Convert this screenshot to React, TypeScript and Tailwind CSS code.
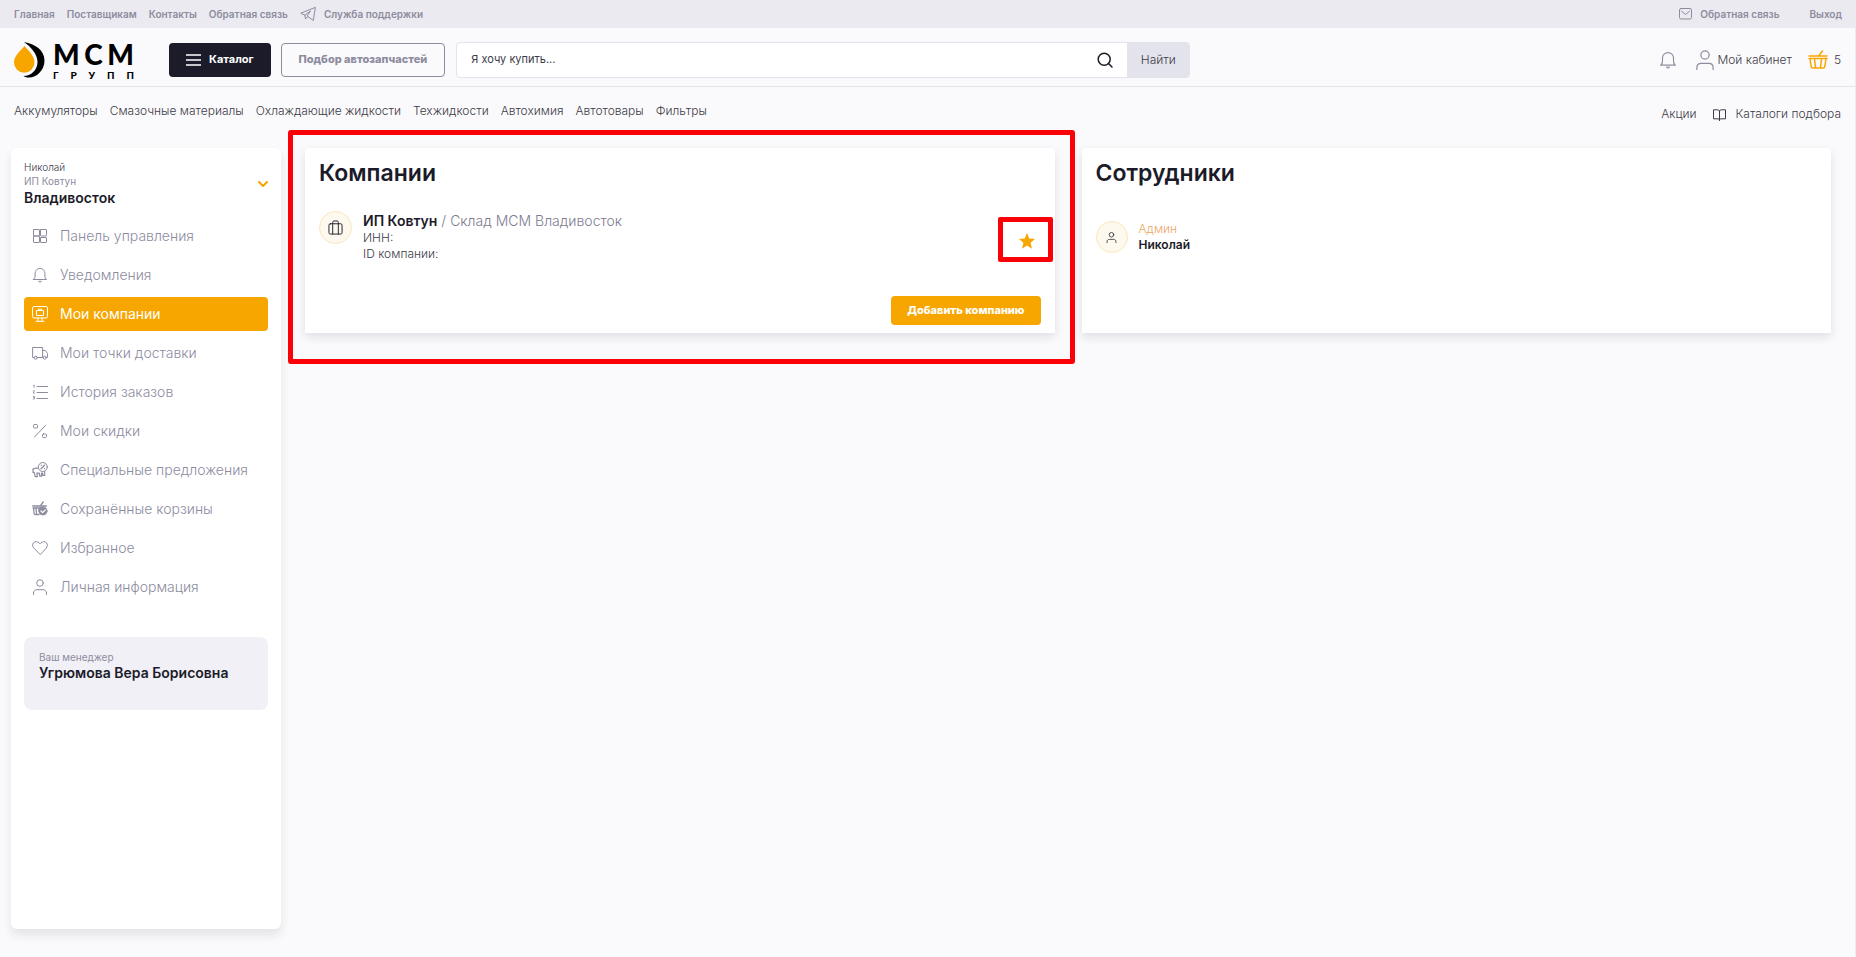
import type { ReactNode } from "react"

const topLinks = ["Главная", "Поставщикам", "Контакты", "Обратная связь"]

const categories = [
  "Аккумуляторы",
  "Смазочные материалы",
  "Охлаждающие жидкости",
  "Техжидкости",
  "Автохимия",
  "Автотовары",
  "Фильтры",
]

interface IconProps {
  className?: string
  viewBox?: string
  strokeWidth?: number
  children: ReactNode
}

function Icon({ className = "size-4", viewBox = "0 0 16 16", strokeWidth = 1, children }: IconProps) {
  return (
    <svg
      className={`shrink-0 ${className}`}
      viewBox={viewBox}
      fill="none"
      stroke="currentColor"
      strokeWidth={strokeWidth}
      strokeLinecap="round"
      strokeLinejoin="round"
      aria-hidden="true"
    >
      {children}
    </svg>
  )
}

const bell = (
  <>
    <path d="M1.5 12.5h13c-1-1-1.6-2-1.6-3.5V6.3a4.9 4.9 0 0 0-9.8 0V9c0 1.500-.6 2.500-1.6 3.5Z" />
    <path d="M6.500 14.500c.8 1 2.200 1 3 0Z" fill="currentColor" strokeWidth="0.500" />
  </>
)

const person = (
  <>
    <circle cx="8" cy="4" r="3.3" />
    <path d="M1.500 15.500V14c0-2 1.500-3.300 3.500-3.300h6c2 0 3.500 1.300 3.500 3.300v1.500" />
  </>
)

const menu = [
  {
    label: "Панель управления",
    icon: (
      <>
        <rect x="1.500" y="1.500" width="6" height="6.500" rx="0.500" />
        <rect x="8.500" y="1.500" width="6" height="6.500" rx="0.500" />
        <rect x="1.500" y="8" width="6" height="6.500" rx="0.500" />
        <rect x="8.500" y="9.500" width="6" height="5" rx="0.500" />
      </>
    ),
  },
  { label: "Уведомления", icon: bell },
  {
    label: "Мои компании",
    active: true,
    icon: (
      <>
        <rect x="0.500" y="0.500" width="15" height="11.500" rx="1.500" />
        <rect x="4.500" y="4.500" width="7" height="5" rx="0.500" />
        <path d="M6.300 4.500V3.200h3.400v1.300M6 12v3M10 12v3M4 15.300h8" />
      </>
    ),
  },
  {
    label: "Мои точки доставки",
    icon: (
      <>
        <path d="M2.300 12.500H.6V2.500h10v10H5.500M10.600 5.500h2.800l2.100 3v4h-1.200M10.600 12.500h.6" />
        <circle cx="3.800" cy="12.700" r="1.500" />
        <circle cx="12.700" cy="12.700" r="1.500" />
      </>
    ),
  },
  {
    label: "История заказов",
    icon: (
      <>
        <path d="M5 2.500h10.500M5 8.500h10.500M5 14.500h10.500" />
        <path d="M1.500 1.500l.7-.5v2.500M1.200 6.800h1.300L1.200 9.200h1.300M1.200 12.500h1.300v2.500H1.200M1.500 13.700h1" strokeWidth="0.800" />
      </>
    ),
  },
  {
    label: "Мои скидки",
    icon: (
      <>
        <path d="M13.500 2.500l-11 11.500" />
        <rect x="1.500" y="1.500" width="4" height="3.500" rx="1" />
        <rect x="10.500" y="11" width="4" height="3.500" rx="1" />
      </>
    ),
  },
  {
    label: "Специальные предложения",
    icon: (
      <>
        <circle cx="10.800" cy="5" r="4.500" />
        <path d="M12.500 3.200L9 6.800M9.200 3.200h.1M12.400 6.600h.1" strokeWidth="1.300" />
        <path d="M6 6.200H3.500c-.6 0-.8.600-1.400.600H1v3.600h1.200l1 4.200h2.200l-.6-3.400h2.500l.5 3h1.800L9.500 11h1.200v2.500h2V9.500" strokeWidth="1.200" />
      </>
    ),
  },
  {
    label: "Сохранённые корзины",
    icon: (
      <>
        <path d="M.8 5h13.600M9 4l2.200-3M1.500 7l.6 5.500c.1.700.5 1 1.200 1H7M1 7h8M4 7.500l.5 4.500M7 7.500v3" strokeWidth="1.300" />
        <circle cx="11" cy="10" r="4" fill="currentColor" />
        <path d="M9 10l1.600 1.600L13.200 9" stroke="white" strokeWidth="1.200" />
      </>
    ),
  },
  {
    label: "Избранное",
    icon: <path d="M8 14.300L1.500 7.800A3.800 3.800 0 0 1 1.300 3C2.900 1.200 5.500 1.300 7 2.900l1 1 1-1c1.500-1.600 4.100-1.700 5.700.1a3.800 3.800 0 0 1-.2 4.800Z" />,
  },
  { label: "Личная информация", icon: person },
]

function Logo() {
  return (
    <a href="#" className="flex w-[120px] shrink-0 items-center gap-2 text-black" aria-label="МСМ Групп">
      <svg className="h-9 w-[31px] shrink-0" viewBox="0 0 31 36" aria-hidden="true">
        <path d="M10 0c11 2 20.500 8 20.500 18.500C30.500 28 23 35.500 15 35.500c-2 0-4-.5-5.500-1.500C17 34 23.500 28 23.500 20 23.500 12 17 5 10 0Z" fill="#000" />
        <path d="M10.500 4C16 10 20.500 14.500 20.500 20.500a10.200 10.200 0 0 1-20.500 0C0 14.500 5 10 10.500 4Z" fill="#f7a600" />
      </svg>
      <span className="flex min-w-0 flex-1 flex-col font-[Lato,sans-serif]">
        <span className="flex justify-between text-[28px] leading-[30px] font-black">
          <span>М</span>
          <span>С</span>
          <span>М</span>
        </span>
        <span className="flex justify-between text-[10px] leading-3 font-black">
          <span>Г</span>
          <span>Р</span>
          <span>У</span>
          <span>П</span>
          <span>П</span>
        </span>
      </span>
    </a>
  )
}

function TopBar() {
  return (
    <div className="flex h-7 items-center justify-between bg-[#ebeaf0] px-[14px] text-[10px] font-semibold text-[#8d8c9f]">
      <nav className="flex items-center gap-3">
        {topLinks.map((link) => (
          <a key={link} href="#">{link}</a>
        ))}
        <a href="#" className="flex items-center gap-2">
          <Icon>
            <path d="M15 1.500L.8 7.200l4 2L10.500 5 7 10l6 4.200ZM4.800 9.200L5.500 13l2-2.300" />
          </Icon>
          Служба поддержки
        </a>
      </nav>
      <div className="flex items-center gap-[30px]">
        <a href="#" className="flex items-center gap-2">
          <Icon className="h-3 w-[13px]" viewBox="0 0 13 12">
            <rect x="0.500" y="0.500" width="12" height="10.500" rx="1.500" />
            <path d="M2.500 3.200l4 3.300 4-3.300" />
          </Icon>
          Обратная связь
        </a>
        <a href="#">Выход</a>
      </div>
    </div>
  )
}

function Header() {
  return (
    <header className="flex h-[59px] items-center border-b border-[#e3e3ea] px-[14px] pt-[5px]">
      <Logo />
      <button className="ml-[35px] flex h-[34px] items-center gap-2 rounded bg-[#1c1b29] px-[17px] text-[11px] font-bold text-white">
        <svg className="h-3 w-[15px]" viewBox="0 0 15 12" stroke="currentColor" strokeWidth="1.500" aria-hidden="true">
          <path d="M0 1h15M0 6h15M0 11h15" />
        </svg>
        Каталог
      </button>
      <button className="ml-[10px] h-[34px] rounded border border-[#8d8c9f] px-[17px] text-[11px] font-extrabold text-[#8d8c9f]">
        Подбор автозапчастей
      </button>
      <form className="ml-[11px] flex h-9 w-[41%] max-w-[734px] rounded border border-[#e3e3ea] bg-white">
        <input
          type="search"
          aria-label="Поиск товаров"
          placeholder="Я хочу купить..."
          className="min-w-0 flex-1 px-[14px] text-[11px] outline-none placeholder:text-[#3c3b47]"
        />
        <span className="mr-[14px] flex items-center text-[#1c1b29]">
          <Icon className="size-4" strokeWidth={1.5}>
            <circle cx="7.200" cy="7.200" r="6" />
            <path d="M11.500 11.500l3.500 3.500" />
          </Icon>
        </span>
        <button type="button" className="w-[62px] bg-[#e3e3ec] text-xs font-light text-[#3c3b47]">Найти</button>
      </form>
      <div className="ml-auto flex items-center text-xs font-light text-[#3c3b47]">
        <button aria-label="Уведомления" className="text-[#8d8c9f]">
          <Icon className="size-[18px]">{bell}</Icon>
        </button>
        <a href="#" className="ml-[18px] flex items-center gap-[2px]">
          <Icon className="size-5 text-[#8d8c9f]">{person}</Icon>
          Мой кабинет
        </a>
        <a href="#" className="ml-4 flex items-center gap-[6px]">
          <Icon className="h-[19px] w-5 text-[#f7a600]" viewBox="0 0 20 19" strokeWidth={1.5}>
            <path d="M1 6h18M1 8.500h18M11 5.500L14.500 1M2 9l1.200 7.500c.2 1 .8 1.500 1.800 1.500h10c1 0 1.600-.5 1.800-1.500L18 9M6.500 9l1 8.500M13.500 9l-1 8.500" />
          </Icon>
          5
        </a>
      </div>
    </header>
  )
}

function CategoryBar() {
  return (
    <div className="flex h-[61px] justify-between px-[14px] pt-4 text-xs leading-4 font-light text-[#3c3b47]">
      <nav className="flex gap-3">
        {categories.map((name) => (
          <a key={name} href="#">{name}</a>
        ))}
      </nav>
      <nav className="flex gap-4 pt-[3px]">
        <a href="#">Акции</a>
        <a href="#" className="flex gap-[10px]">
          <Icon className="mt-[3px] h-3 w-[13px]" viewBox="0 0 13 12">
            <path d="M6.500 2v9.500M6.500 2C6 1 5 .8 4 .8H.5v9H5c.8 0 1.500.7 1.500 1.700 0-1 .7-1.700 1.500-1.700h4.500v-9H9C8 .8 7 1 6.500 2Z" />
          </Icon>
          Каталоги подбора
        </a>
      </nav>
    </div>
  )
}

function Sidebar() {
  return (
    <aside className="w-[270px] shrink-0 rounded-md bg-white px-[13px] pt-3 shadow-[0_6px_10px_rgba(30,30,60,0.1)]">
      <button className="flex w-full items-center justify-between text-left">
        <span className="flex flex-col">
          <span className="text-[10px] leading-[14px] font-light text-[#3c3b47]">Николай</span>
          <span className="text-[10px] leading-[14px] text-[#8d8c9f]">ИП Ковтун</span>
          <span className="text-sm leading-[19px] font-semibold text-[#1c1b29]">Владивосток</span>
        </span>
        <Icon className="h-[6px] w-[10px] text-[#f7a600]" viewBox="0 0 10 6" strokeWidth={2}>
          <path d="M1 1l4 4 4-4" />
        </Icon>
      </button>
      <nav className="mt-3 flex flex-col gap-[5px]">
        {menu.map((item) => (
          <a
            key={item.label}
            href="#"
            className={`flex h-[34px] items-center gap-3 rounded px-2 text-sm ${
              item.active ? "bg-[#f7a600] text-white" : "font-light text-[#8d8c9f]"
            }`}
          >
            <Icon>{item.icon}</Icon>
            {item.label}
          </a>
        ))}
      </nav>
      <div className="mt-[33px] h-[73px] rounded-lg bg-[#f1f0f6] px-[15px] pt-3">
        <p className="text-[10px] leading-4 text-[#8d8c9f]">Ваш менеджер</p>
        <p className="text-sm leading-4 font-semibold text-[#1c1b29]">Угрюмова Вера Борисовна</p>
      </div>
    </aside>
  )
}

function Card({ title, children }: { title: string; children: ReactNode }) {
  return (
    <section className="flex min-h-[185px] flex-col rounded-t bg-white px-[14px] pt-[11px] pb-2 shadow-[0_4px_10px_rgba(30,30,60,0.12)]">
      <h2 className="text-[23px] leading-7 font-semibold text-[#1c1b29]">{title}</h2>
      {children}
    </section>
  )
}

function Companies() {
  return (
    <Card title="Компании">
      <div className="mt-6 flex">
        <span className="flex size-[33px] items-center justify-center rounded-full border border-[#fbe6bd] bg-[#fef9ee] text-[#1c1b29]">
          <Icon className="size-[15px]">
            <rect x="1" y="4" width="14" height="11" rx="1.500" />
            <path d="M5 15V2.500c0-.8.500-1.500 1.300-1.500h3.400c.8 0 1.300.7 1.300 1.500V15" />
          </Icon>
        </span>
        <div className="ml-[11px] text-xs leading-4 font-light text-[#3c3b47]">
          <p className="text-sm leading-[19px] text-[#7d7c8f]">
            <b className="font-semibold text-[#1c1b29]">ИП Ковтун</b> / Склад МСМ Владивосток
          </p>
          <p>ИНН:</p>
          <p>ID компании:</p>
        </div>
        <div className="relative ml-auto flex w-7 items-center justify-center self-center text-[#f7a600]">
          <button aria-label="Основная компания" className="mt-2">
            <svg className="size-4" viewBox="0 0 16 16" fill="currentColor" aria-hidden="true">
              <path d="M8 0l2.200 5.500 5.800.5-4.400 3.800L13 15.800 8 12.600l-5 3.200 1.400-6L0 6l5.800-.5Z" />
            </svg>
          </button>
          <span className="pointer-events-none absolute -top-2 -right-3 h-[45px] w-[55px] rounded-[2px] border-5 border-[#fb0007]" />
        </div>
      </div>
      <button className="mt-auto h-[29px] self-end rounded bg-[#f7a600] px-4 text-[11px] font-extrabold text-white">
        Добавить компанию
      </button>
    </Card>
  )
}

function Employees() {
  return (
    <Card title="Сотрудники">
      <div className="mt-[34px] flex items-center gap-[11px]">
        <span className="flex size-8 items-center justify-center rounded-full border border-[#fbe6bd] bg-[#fef9ee] text-[#3c3b47]">
          <Icon className="size-[11px]" strokeWidth={1.3}>{person}</Icon>
        </span>
        <div className="text-xs leading-4">
          <p className="font-light text-[#eda565]">Админ</p>
          <p className="font-semibold text-[#1c1b29]">Николай</p>
        </div>
      </div>
    </Card>
  )
}

export default function App() {
  return (
    <div className="flex min-h-screen flex-col bg-[#fafafc] font-[Inter,sans-serif]">
      <TopBar />
      <div className="flex flex-1 flex-col border-r border-[#ebeaf0]">
        <Header />
        <CategoryBar />
        <main className="flex flex-1 gap-6 pr-6 pb-7 pl-[11px]">
          <Sidebar />
          <div className="grid flex-1 grid-cols-2 items-start gap-[27px]">
            <div className="relative">
              <Companies />
              <span className="pointer-events-none absolute -top-[18px] -right-5 -bottom-[31px] -left-[17px] rounded-[3px] border-5 border-[#fb0007]" />
            </div>
            <Employees />
          </div>
        </main>
      </div>
    </div>
  )
}
